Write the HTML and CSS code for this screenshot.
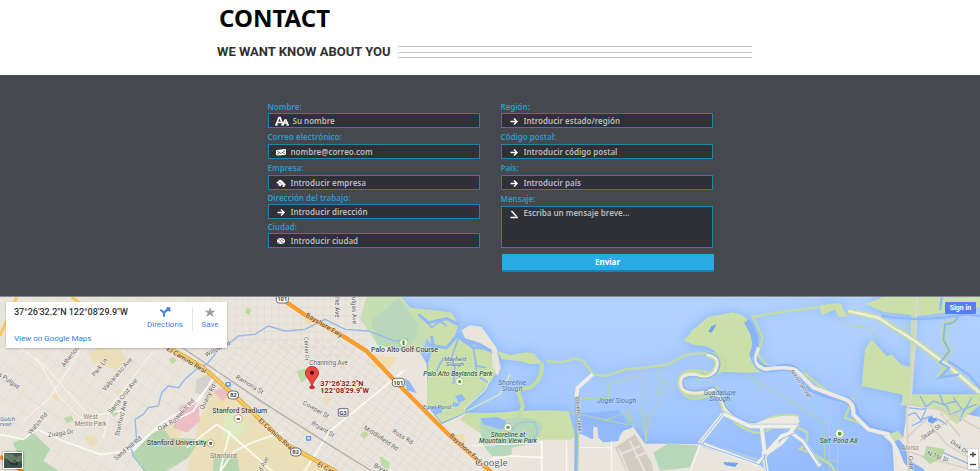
FILE: index.html
```html
<!DOCTYPE html>
<html lang="es">
<head>
<meta charset="utf-8">
<meta name="viewport" content="width=device-width, initial-scale=1">
<title>Contact</title>
<link rel="stylesheet" href="styles.css">
</head>
<body>
<header class="intro">
  <h1>CONTACT</h1>
  <div class="tagline"><h2>WE WANT KNOW ABOUT YOU</h2><div class="rules"></div></div>
</header>

<main>
<section class="contact">
  <form class="form">
    <div class="column">
      <label for="name">Nombre:</label>
      <div class="field">
        <svg class="icon wide" viewBox="0 0 28 20"><g fill="none" stroke="#fff" stroke-width="3.4"><path d="M2 18 8 3h2l6 15M5 13h9M16 18l4-10h2l4 10M18 14h6"/></g><path fill="#fff" d="M0 17h6v2H0zM12 17h6v2h-6zM22 17h6v2h-6z"/></svg>
        <input id="name" type="text" placeholder="Su nombre">
      </div>
      <label for="email">Correo electrónico:</label>
      <div class="field">
        <svg class="icon" viewBox="0 0 24 20"><path fill="#fff" d="M3 6 20 4q2 0 2 2v8q0 2-2 2L5 17q-3 0-3-2V8q0-2 1-2"/><path d="m4 8 8 5 8-6M4 15l5-4M20 14l-5-3" fill="none" stroke="#303136" stroke-width="1.3"/></svg>
        <input id="email" type="email" placeholder="nombre@correo.com">
      </div>
      <label for="company">Empresa:</label>
      <div class="field">
        <svg class="icon" viewBox="0 0 24 20"><path fill="#fff" d="m2 10 8-7 5 3 7 8-3 1v3h-4v-4h-3v3l-5-2v-4z"/><path stroke="#303136" d="m9 8 7 7"/></svg>
        <input id="company" type="text" placeholder="Introducir empresa">
      </div>
      <label class="tight" for="address">Dirección del trabajo:</label>
      <div class="field">
        <svg class="icon" viewBox="0 0 24 20"><path d="M5 11h13M12 5l6 6-6 6" fill="none" stroke="#fff" stroke-width="3"/></svg>
        <input id="address" type="text" placeholder="Introducir dirección">
      </div>
      <label class="tight" for="city">Ciudad:</label>
      <div class="field">
        <svg class="icon" viewBox="0 0 24 20"><ellipse cx="12" cy="10" rx="8" ry="6" fill="#fff"/><path d="m7 7 4 2 2 4 4 1M12 5l2 3 4 1M6 12l3 1" fill="none" stroke="#303136" stroke-width="1.3"/></svg>
        <input id="city" type="text" placeholder="Introducir ciudad">
      </div>
    </div>
    <div class="column">
      <label for="region">Región:</label>
      <div class="field">
        <svg class="icon" viewBox="0 0 24 20"><path d="M5 11h13M12 5l6 6-6 6" fill="none" stroke="#fff" stroke-width="3"/></svg>
        <input id="region" type="text" placeholder="Introducir estado/región">
      </div>
      <label for="zip">Código postal:</label>
      <div class="field">
        <svg class="icon" viewBox="0 0 24 20"><path d="M5 11h13M12 5l6 6-6 6" fill="none" stroke="#fff" stroke-width="3"/></svg>
        <input id="zip" type="text" placeholder="Introducir código postal">
      </div>
      <label for="country">País:</label>
      <div class="field">
        <svg class="icon" viewBox="0 0 24 20"><path d="M5 11h13M12 5l6 6-6 6" fill="none" stroke="#fff" stroke-width="3"/></svg>
        <input id="country" type="text" placeholder="Introducir país">
      </div>
      <label for="message">Mensaje:</label>
      <div class="field message">
        <svg class="icon" viewBox="0 0 24 20"><path d="m7 4 10 11M5 17h15" fill="none" stroke="#fff" stroke-width="3"/></svg>
        <textarea id="message" rows="3" placeholder="Escriba un mensaje breve..."></textarea>
      </div>
      <button class="send" type="submit">Enviar</button>
    </div>
  </form>
</section>

<section class="map">
<svg class="canvas" viewBox="0 18 2940 525" role="img" aria-label="Map of Palo Alto">
  <defs>
    <pattern id="grid" width="26" height="19" patternUnits="userSpaceOnUse" patternTransform="rotate(36)"><path d="M0 0h26M0 0v19" fill="none" stroke="#d3cec5" stroke-width="2"/></pattern>
    <pattern id="blocks" width="44" height="32" patternUnits="userSpaceOnUse" patternTransform="rotate(-56)"><path d="M0 0h44M0 0v32" fill="none" stroke="#d6d1c8" stroke-width="2"/></pattern>
    <pattern id="square" width="22" height="24" patternUnits="userSpaceOnUse"><path d="M0 0h22M0 0v24" fill="none" stroke="#d8d3ca" stroke-width="2"/></pattern>
    <filter id="shade" filterUnits="userSpaceOnUse" x="-60" y="-60" width="3060" height="680" color-interpolation-filters="sRGB"><feDropShadow dx="0" dy="0" stdDeviation="16" flood-color="#7dabf6" flood-opacity=".8"/></filter>
    <linearGradient id="bay" x2="0" y2="1"><stop stop-color="#b3d2ff"/><stop offset=".5" stop-color="#a9cbff"/><stop offset="1" stop-color="#96bdfc"/></linearGradient>
  </defs>
  <rect y="18" width="2940" height="525" fill="url(#bay)"/>

  <!-- coast and levees -->
  <g filter="url(#shade)">
    <path class="land" d="M0 18h1160l120 200 5 130 40 52 75-35 70 25v170H0z"/>
    <path fill="#cadfaa" d="m1110 18 90 0 30 32 75 8 50 7 20 35-10 35 25 20 60 13 35 27 10 40-25 40-70 70-5 20-70 30-45-60 5-120 15-50-50-55z"/>
    <path class="land" d="m1385 118 25-15 35 5 20 28 25 35 12 60-10 25-15-30-2-50-35-20-45-15z"/>
    <path fill="#cadfaa" d="m1400 365 70 1v80l-90-60z"/>
  <g transform="translate(1470)">
    <path fill="#cadfaa" d="M0 366q130-12 235-6l28 92H0z"/>
    <path class="land" d="m-60 446 300 0 30-18 40 17 0-38 12 2 3 31 15 14 45-4 5-20-15-4 10-10 35-4 5-14 15 25 25 35 80 0 90 2 70 28 100 30 30 23H-60zM1212 543l-5-85-30-25 63 5 15-105 215 45v165z"/>
    <path fill="#cadfaa" d="M578 147q20-10 25-27l20-15 30-27 75-14q40 4 47 31l25 30-15 70q10 38 40 48-60 5-115 0-30 3-42-2 26-15 19-40-15-40-75-38z"/>
    <path fill="#cadfaa" d="m1115 285 10-110 20-30 45 50 15-5 30 32 25 5 5-209h10l-10 325-30 0 3-32zM1125 38l55-20h290v30l-90 15-90 12-110-12z"/>
    <path fill="#cadfaa" d="m22 180 40 12 45-8 25 3 23 30-35 3-30-10-55-5zM1255 310h215v32l-70 58-60-50-110-8zM987 43l45-6 20 0 20 42-28-3-10-20-40 16z"/>
    <g fill="none" stroke="#c3dca0" stroke-width="7">
      <path d="m170 210 45 4 40-12 25 8 30 40 35 5 60-20 60-5 70-10 50-28q100-15 115 10 20 30-10 42l-25 5q-70-25-90 5-15 60 35 70l55-10q40 0 40 40l35 45q60 40 90 20 60-35 120 5 10 30-20 50l40 15 50 30 30 40"/>
      <path d="m785 78 60-10 140-20M790 80l28 60-15 50 40 48 60-3 45 15 60 50 70 28 20 40 50 50 60 10M1090 320l-25 60 55 20 80 25"/>
      <path stroke-width="12" d="M155 215q5 50-35 75l-38 5 17 50-25 60"/>
    </g>
  </g>
  </g>

  <!-- city blocks and parks -->
  <path fill="url(#blocks)" d="M0 18h630l20 160-110 170-150 195H0z"/>
  <path fill="url(#grid)" d="m640 220 120-80 310 10 80 110 280 283H900L620 260z"/>
  <path fill="url(#square)" d="M630 18h470v140l-80 60-220-60-130 30z"/>
  <path fill="#eadfb9" d="m630 290 70 20 170 160 150 73H560l30-130z"/>
  <path fill="#eadfb9" d="m265 185 30-15 65 5 20 30-30 30-70-15zM480 410l60-20 10 40-60 40zM250 440l25-10 20 20-20 20z"/>
  <path fill="#eebfc2" d="m540 345 55-15 5 60-40 35-40-15zM640 300l30-10 20 25-25 15z"/>
  <path fill="#d5d1d1" d="m590 265 35-15 30 20-40 45-30-10z"/>
  <path fill="#b7d5ae" d="m425 445 65-35 20 30 90 5-35 55-70 43h-60l-40-50zM40 455l60-30 50 50-20 35 50 33H70zM640 490l70 0 10 53h-80z"/>
  <path fill="#c5deb2" d="M1100 18h105l45 55 35 50-20 65-40-10-90-15-55-80z"/>
  <path fill="#b9d7bb" d="m1115 90 80-68 60 78-10 45-40 35-75-20z"/>
  <g fill="#bedba4"><path d="m740 50 15 5-8 18-12-8zM505 205l15-8 10 12-12 10zM110 90l20-5v20l-15 5zM960 300l20-8-3 18zM890 240l25-8 10 25-20 20zM1175 260l50 10-10 20-35-7zM1080 430l15-10 12 10-15 14zM800 340l15 5-8 8zM190 380l25-5 6 14-20 8zM1140 495l30 20-5 20-20-10zM330 355l15-5 10 18-15 10zM550 160l25-4-10 14z"/></g>
  <g fill="#f0ddb1"><path d="m1120 190 70 10-25 35-50-10zM915 70l30 10-5 35-25-20zM975 315l20 10-10 10-20-10zM1020 220l20 4-8 14zM155 315l20-12 8 16-18 8zM345 300l15-5 6 12-14 8zM1360 430l30 0 10 25-30 10zM640 330l45 5 20 40-50 0z"/></g>
  <path fill="#dfe9c0" d="m675 375 40-10 30 45-40 40-40-10z"/>

  <g fill="none" stroke="#faf8f3" stroke-width="5">
    <path d="M0 430 70 445l40-30 80 35 110 40 90-10 90-80 110-70 70-90M400 480l60-60 120-60 60-100M1210 240l-60 50-160 130-70 110-10 13M560 470l90-70 30 20 80 70 60 53M660 543l40-60 60-30 90-30M690 420l-30 120"/>
    <path stroke-width="3" d="m110 200 70 120 60 60 120-20M240 180l-90 140-80 70M460 180 330 350l-20 90M60 170l80 60 150 170"/>
  </g>
  <path d="m540 165 250 170 220 140 110 68" fill="none" stroke="#b4b1ad" stroke-width="4"/>
  <g fill="none" stroke="#95b9ee" stroke-width="4">
    <path d="m400 490-10-25 20-20-5-60 25-15 15-20 30-5 10-40 20-20 30 5 20-25 40-35 25-10 25-30 20-40 20 10 30-25 50-5 40-25 50 15 60-5 60-30 60 30 70 5 80 30 40-5"/>
    <path stroke-width="3" d="m395 490 40 50"/>
  </g>

  <!-- wetlands -->
  <g fill="none" stroke="#91b9fc" stroke-width="9">
    <path d="m1255 70 30 25 55-12 35 17M1375 130l-35 40-40-5-5-30M1375 135l45 35 30 0 20 10"/>
    <path stroke-width="5" d="m1375 140-20 60 10 30-5 50M1280 90l15 20 25-20 20 15M1330 200l-20 40M1420 175l10 50 30 5M1425 210l5 30M1440 260l25 15-10 30-55 45"/>
  </g>
  <path fill="#91b9fc" d="m1215 262 15 10 20 35-30-10zM1365 315l20-5 12 15-20 12zM1360 333l20 5-8 10-16-4zM1295 350l35-5-5 20-20 5z"/>
  <path fill="none" stroke="#dde9bd" stroke-width="4" d="m1455 240 12 30-10 25-65 60M1400 360l100-50 30-60"/>
  <g fill="none">
    <path stroke="#d99d35" stroke-width="13" d="m490 160 120 70 90 80 160 150 150 83"/>
    <path stroke="#fac85d" stroke-width="9" d="m490 160 120 70 90 80 160 150 150 83M0 135l50-117M215 18l30 22"/>
    <path stroke="#ed9121" stroke-width="12" d="m840 20 80 55 100 55 80 50 90 95 160 160 135 118M0 497l70 46"/>
    <path stroke="#ff9d29" stroke-width="9" d="m840 20 80 55 100 55 80 50 90 95 160 160 135 118"/>
  </g>

  <!-- south bay -->
  <g transform="translate(1470)">
    <path fill="#b7d7bb" d="m-30 390 60-5 40-5 60 2 30 23-25 50-70 15v25h-60l-30-40zM490 485l45-28 90 7-25 65-90 10z"/>
    <path d="M65 420q15-35 70-25 20 45-20 50M15 465l60-10" fill="none" stroke="#9ac6df" stroke-width="4"/>
    <path fill="#91b9fc" d="m-30 382 50-4 25 10 5 22-20 5-50-15zM310 365l75-8 45 52-30 10-20 30-40 5-15-45-15-2-4 38-35-20-10-60z"/>
    <path fill="#d2cdc4" d="m375 470 60-40 50 85 5 28h-80z"/>
    <path fill="none" stroke="#e6e2da" stroke-width="6" d="m390 490 60-25M415 543l-30-70M435 500l40-20M420 450l45 93"/>
    <path fill="none" stroke="#fffdf8" stroke-width="5" d="M155 450v93M0 505l60-10 100 5"/>
    <path fill="none" stroke="#fbf8f1" stroke-width="3" d="M230 450v93M365 450v93M-60 465l215-10M270 470h95M630 462l-30 81"/>
    <path fill="none" stroke="#93b9ed" stroke-width="11" d="M260 315v60l-2 168"/>
    <path fill="none" stroke="#bfdda0" stroke-width="4" d="M267 315v60l-3 168"/>
    <path fill="none" stroke="#b9d69b" stroke-width="3" d="M455 230v130l15 90-10-80M505 225l-3 50 8 65-30 30-15 85M270 323h85v-45l100-25M505 262l55 35M755 245l260 155M1018 325v218M1043 400v143M1004 430v80h40M235 362l180 40 0-40-75 28M415 362l20 45M1045 80q20 30 90 28 30 15 22 42M1120 275l-30 40"/>
    <path fill="none" stroke="#f2eee5" stroke-width="11" d="m308 250-45 40-4 28"/>
    <path fill="none" stroke="#c3dca0" stroke-width="20" d="M650 190q50 10 25 50-20 30-60 10-55-5-40 40 20 30 100 5 20 20 30 60 50 60 110 45 50-30 110-18"/>
    <path fill="none" stroke="#eeeae1" stroke-width="9" d="M650 190q50 10 25 50-20 30-60 10-55-5-40 40 20 30 100 5 20 20 30 60 50 60 110 45 50-30 110-18"/>
    <path fill="none" stroke="#8fb9f7" stroke-width="5" d="M650 184q55 10 33 58-24 30-64 16-50-5-37 31 23 20 88-2 25 23 38 61 50 57 108 43"/>
    <path fill="none" stroke="#8ab4f8" stroke-width="19" d="M770 90q40 60 18 100 10 45 60 45 60-20 80 15l30 40q60 30 110 35 30 20 30 45 20 30 50 45l50 12 35 40 20 50 45 26"/>
    <path fill="none" stroke="#eeeae1" stroke-width="12" d="M805 170q-30 50 20 65 80-10 95 5l50 50 80 30q45 10 40 50l45 45 60 15q30 50 35 85l25 20"/>
    <path fill="none" stroke="#91b9fc" stroke-width="5" d="M798 170q-25 60 28 73 72-12 88 3l50 50 80 32"/>
    <path fill="#eeeae1" d="m780 402 60-20 70-4 20 10-15 25-40 0-60 0z"/>
    <path fill="none" stroke="#aac8e8" stroke-width="16" d="m700 368-72 90M700 368l80 38 50 0 85 0-90 85-10-80M640 460l180 55M830 485l75-60 35 25 50 75M820 480l10 63"/>
    <path fill="none" stroke="#f1eee6" stroke-width="11" d="m700 368-72 90M700 368l80 38 50 0 85 0-40 50-50 35-10-80M640 460l160 60 30-30M830 485l45-50 30-10 35 25 50 75M820 480l10 63"/>
    <path fill="none" stroke="#91b9fc" stroke-width="3" d="m700 368-72 90 180 63 22-32M865 450l50-25 30 25 45 70M822 490l8 53"/>
    <path fill="#6ba4f2" d="m700 513 45 3-10 12-30-6zM665 105l15-5-15 25-10-3zM1313 382l14-8 2 8 14-2-14 18-14-5z"/>
    <path fill="none" stroke="#8ab5f1" stroke-width="4" d="m1250 350 50 5 30-25 40 15 10 25 80-30M1290 315l20 35-15 35 30-10M1350 310l10 30 40-10M1390 320l30 40-10 30M1370 400l-25-15-20 12M1250 375l25-10 20 25-30 15M1300 500l60-15 80 35 30 10M1445 320l-25 45"/>
    <path fill="none" stroke="#dbd8ca" stroke-width="7" d="M1281 18 1275 150 1262 320 1250 360 1256 543"/>
    <path fill="none" stroke="#c3dca0" stroke-width="17" d="m1075 60 90 20 110 70 100 75 95 80M1400 80q-10 15-35 20l-5 45 20 35-30 35 20 15-25 30"/>
    <path fill="none" stroke="#f0ece3" stroke-width="8" d="m1075 60 90 20 110 70 100 75 95 80"/>
    <path fill="none" stroke="#8fb9fc" stroke-width="7" d="M1175 75q120 20 250-5l45 5M1405 75q-10 25-40 25l-5 45 18 35-28 35 28 15-30 30 60-10M1375 210l60 40 35 40M1355 18l-5 40"/>
    <path fill="none" stroke="#bad795" stroke-width="3" d="m1195 95 30 20 30-15-5 25 20 10"/>
    <path fill="none" stroke="#d4cec3" stroke-width="4" d="m1250 440 65-60M1290 450l130-95M1320 400l50 60 100 60M1350 365l60 70M1250 480l60 20 160 43M1255 340l115 20 100 55"/>
    <path fill="#b7d7a2" d="m1310 465 55 10-15 30-30 15-20-20z"/>
    <path fill="#cadfaa" d="m1195 430 30-10 15 20-25 10z"/>
  </g>

  <!-- place names -->
  <g class="road">
    <text transform="translate(193 229) rotate(-52)">Atherton Ave</text><text transform="translate(284 258) rotate(-52)">Park Ln</text>
    <text transform="translate(315 301) rotate(-49)">Valparaiso Ave</text><text transform="translate(333 369) rotate(-51)">Santa Cruz Ave</text>
    <text transform="translate(357 436) rotate(-77)">Stanford Ave</text><text transform="translate(92 431) rotate(-49)">Walsh Rd</text>
    <text transform="translate(145 438) rotate(-8)">Zuaga Dr</text><text transform="translate(347 509) rotate(-39)">Sand Hill Rd</text>
    <text transform="translate(477 420) rotate(-27)">Oak Rd</text><text transform="translate(532 389) rotate(-48)">Welch Rd</text>
    <text transform="translate(609 357) rotate(-62)">Quarry Rd</text><text transform="translate(619 198) rotate(-27)">Willow Rd</text>
    <text transform="translate(706 262) rotate(31)">Ramona St</text><text transform="translate(907 339) rotate(30)">Cowper St</text>
    <text transform="translate(933 400) rotate(31)">Bryant St</text><text transform="translate(1090 413) rotate(34)">Middlefield Rd</text>
    <text transform="translate(1175 424) rotate(32)">Ross Rd</text><text transform="translate(1120 527) rotate(28)">Bryant St</text>
    <text class="creek" transform="translate(913 138) rotate(88)">Center Dr</text><text x="928" y="221">Channing Ave</text>
    <text transform="translate(1005 18) rotate(90)">rke Ave</text><text transform="translate(1055 18) rotate(88)">ulgas Ave</text>
    <text transform="translate(-6 254) rotate(34)">s Pulgas</text><text transform="translate(785 543) rotate(-62)">d Ave</text>
    <text class="creek" transform="translate(1728 315) rotate(87)">Stevens Creek</text><text class="creek" transform="translate(2370 240) rotate(55)">Alviso Slough</text>
    <text transform="translate(2770 447) rotate(-36)">State St</text><text transform="translate(2850 455) rotate(36)">Disk Dr</text>
    <text transform="translate(2780 491) rotate(20)">N 1st St</text><text transform="translate(2725 495) rotate(88)">Gold St</text>
  </g>
  <g class="highway"><text transform="translate(499 178) rotate(31)">El Camino Real</text><text transform="translate(774 391) rotate(42)">El Camino Real</text><text transform="translate(950 524) rotate(28)">El Camino</text><text transform="translate(916 76) rotate(31)">Bayshore Fwy</text><text transform="translate(1347 436) rotate(42)">Bayshore Fwy</text></g>
  <g class="place"><text x="637" y="365">Stanford Stadium</text><text x="440" y="463">Stanford University</text><text x="1113" y="183">Palo Alto Golf Course</text></g>
  <g class="town"><text x="272" y="383" text-anchor="middle">West</text><text x="272" y="404" text-anchor="middle">Menlo Park</text><text class="big" x="630" y="502">Stanford</text><text x="2705" y="477">Alviso</text></g>
  <g class="park"><text x="1270" y="254">Palo Alto Baylands Park</text><text x="1524" y="437" text-anchor="middle">Shoreline at</text><text x="1524" y="456" text-anchor="middle">Mountain View Park</text><text x="2459" y="456">Salt-Pond A8</text></g>
  <g class="water"><text x="1365" y="210" text-anchor="middle">Mayfield</text><text x="1365" y="226" text-anchor="middle">Slough</text><text x="1268" y="353">Egret Pond</text><text x="0" y="389">Gulch</text><text x="0" y="405">rvoir</text><text class="big" x="1536" y="282" text-anchor="middle">Shoreline</text><text class="big" x="1536" y="301" text-anchor="middle">Slough</text><text class="big" x="1791" y="336">Jogel Slough</text><text class="big" x="2159" y="312" text-anchor="middle">Guadalupe</text><text class="big" x="2159" y="331" text-anchor="middle">Slough</text></g>

  <g class="shield">
    <rect x="829" y="12" width="36" height="24" rx="8"/><text x="847" y="31">101</text>
    <rect x="1177" y="262" width="36" height="24" rx="8"/><text x="1195" y="281">101</text>
    <rect x="683" y="300" width="33" height="24" rx="12"/><text x="700" y="319">82</text>
    <rect x="871" y="471" width="33" height="24" rx="12"/><text x="887" y="490">82</text>
    <rect x="1015" y="353" width="29" height="22" rx="1"/><text x="1029" y="371">G3</text>
  </g>
  <g fill="#fff"><g stroke="#a98e70" stroke-width="2"><circle cx="715" cy="383" r="12"/><circle cx="632" cy="457" r="11"/></g><g stroke="#90ad80" stroke-width="2"><circle cx="1211" cy="155" r="12"/><circle cx="1379" cy="272" r="12"/><circle cx="1524" cy="409" r="12"/><circle cx="2519" cy="428" r="13"/></g></g>
  <g fill="#59a51d"><circle cx="1379" cy="272" r="5"/><circle cx="1524" cy="409" r="5"/><circle cx="2519" cy="428" r="6"/><path d="M1207 148h7v14h-7z"/></g>
  <path fill="#94603b" d="M710 381h10v6h-10zM626 453h12l-3 9h-6z"/>
  <g fill="#549bea"><path d="M677 273h15v14h-15zM918 435h15v14h-15z"/><path fill="#fff" d="M681 277h7v6h-7zM922 439h7v6h-7z"/></g>

  <ellipse cx="936" cy="289" rx="8" ry="6" fill="#d6292b"/>
  <path d="M936 289c-3-22-20-29-20-43a20 20 0 0 1 40 0c0 14-17 21-20 43" fill="#ed4441" stroke="#a32525" stroke-width="2"/><circle cx="936" cy="245" r="6" fill="#4a0b0d"/>
  <g class="pin"><text x="961" y="284">37°26'32.2"N</text><text x="961" y="307">122°08'29.9"W</text></g>
  <text class="brand" x="1426" y="525">Google</text>
</svg>

<div class="card">
  <div class="location"><strong>37°26'32.2"N 122°08'29.9"W</strong><a href="#">View on Google Maps</a></div>
  <a class="action" href="#"><svg viewBox="0 0 36 30"><path d="M15 29V17L4 8M17 18q0-8 10-9" fill="none" stroke="#4285e8" stroke-width="6"/><path fill="#4285e8" d="M22 1h12v14l-5-3-7 0z"/></svg>Directions</a>
  <a class="action save" href="#"><svg viewBox="0 0 36 32"><path fill="#9b9b9b" d="m18 0 4 12h14l-11 7 5 13-12-8-12 8 5-13L0 12h14z"/></svg>Save</a>
</div>
<button class="signin" type="button">Sign in</button>
<button class="satellite" type="button" aria-label="Satellite"><svg viewBox="0 0 54 42" preserveAspectRatio="none"><path fill="#3c544b" d="M0 0h54v42H0z"/><path fill="#617967" d="m0 0 25 3 10 8 19-6v18L25 28 0 13z"/><path fill="#2b352d" d="m7 12 15 12 12-4 10 8-6 9-20-5z"/><path d="m5 8 14 16 14 2 12-9" fill="none" stroke="#a1ac96" stroke-width="2"/></svg></button>
<div class="zoom"><button type="button" aria-label="Zoom in"><svg viewBox="0 0 10 9"><path d="M2 4.5h6M5 2v5" stroke="#444" stroke-width="1.4"/></svg></button><button type="button" aria-label="Zoom out"><svg viewBox="0 0 10 9"><path d="M2 4.5h6" stroke="#444" stroke-width="1.4"/></svg></button></div>
</section>
</main>
</body>
</html>
```
FILE: styles.css
```css
* { box-sizing: border-box; }
body { margin: 0; background: #fff; font-family: "Noto Sans", sans-serif; }
h1, h2 { margin: 0; }
button, input, textarea { font: inherit; }
a { color: #3b7ce6; text-decoration: none; }

.intro { padding: 3px 228px 14px 217px; }
.intro h1 { padding-left: 2px; color: #050505; font-size: 24px; line-height: 30px; }
.tagline { display: flex; align-items: center; gap: 7px; padding-top: 10px; }
.tagline h2 { color: #303030; font-family: Roboto, "Noto Sans", sans-serif; font-size: 13px; line-height: 18px; white-space: nowrap; }
.rules { flex: 1; height: 12px; border: solid #c6c6c6; border-width: 1px 0; background: linear-gradient(#c6c6c6, #c6c6c6) center / 100% 1px no-repeat; }

.contact { padding: 26px 16px 24px; background: #45484d; }
.form { display: grid; grid-template-columns: 1fr 1fr; gap: 21px; max-width: 445px; margin: 0 auto; }
.column { display: flex; flex-direction: column; color: #2c9bca; font-size: 8px; font-weight: 600; }
.column label { height: 16px; padding-top: 3px; line-height: 12px; }
.column label:first-child { height: 12px; padding-top: 0; }
.column label.tight { height: 14px; padding-top: 2px; }
.field { display: flex; align-items: center; gap: 4px; height: 15px; padding-left: 6px; border: 1px solid #2184ad; background: #303136; }
.field input, .field textarea { flex: 1; min-width: 0; height: 13px; padding: 0; border: 0; outline: 0; background: transparent; color: #c3c4c6; line-height: 13px; resize: none; }
.field ::placeholder { color: #b9babd; opacity: 1; font-weight: 600; }
.icon { width: 12px; height: 10px; }
.icon.wide { width: 14px; }
.field.message { align-items: flex-start; height: 42px; }
.message .icon { margin-top: 2px; }
.field.message textarea { height: 40px; line-height: 12px; }
.send { height: 18px; margin: 6px -1px 0 1px; padding: 0; border: 0; border-bottom: 2px solid #1783b3; border-radius: 1px; background: #29abe5; color: #fff; font-weight: 700; line-height: 14px; }

.map { position: relative; overflow: hidden; border-top: 1px solid #85898e; font-family: Roboto, sans-serif; }
.canvas { display: block; width: 100%; height: auto; font-family: Roboto, sans-serif; }
.land { fill: #e9e5dc; }
.canvas text { paint-order: stroke; stroke: #ffffff99; stroke-width: 3px; }
.road { fill: #65615e; font-size: 19px; }
.creek { font-size: 17px; }
.highway { fill: #7d4a12; font-size: 20px; font-weight: 500; }
.place { fill: #484946; font-size: 21px; font-weight: 500; }
.town { fill: #8b7761; font-size: 19px; }
.park { fill: #345f3c; font-size: 20px; font-weight: 500; font-style: italic; }
.water { fill: #4b70a8; font-size: 18px; font-style: italic; }
.canvas .water text { stroke: #ffffff44; }
.canvas .big { font-size: 21px; }
.shield { fill: #444; font-size: 18px; font-weight: 700; text-anchor: middle; }
.shield rect { fill: #fff; stroke: #6e6e6e; stroke-width: 3px; }
.pin { fill: #971820; font-size: 22px; font-weight: 700; }
.canvas .brand { fill: #5b5b58; font-family: "Liberation Serif", serif; font-size: 33px; stroke: #fff; }

.card { position: absolute; top: 5px; left: 6px; display: flex; width: 221px; height: 46px; padding: 5px 0 4px 8px; background: #fff; box-shadow: 0 1px 2px #0003; font-size: 8px; }
.location { display: flex; flex: 1; flex-direction: column; justify-content: space-between; line-height: 10px; }
.location strong { color: #303030; font-size: 9px; font-weight: 500; white-space: nowrap; }
.action { display: flex; flex-direction: column; align-items: center; gap: 2px; width: 54px; height: 24px; line-height: 12px; }
.action svg { width: 12px; height: 11px; }
.action.save { width: 35px; border-left: 1px solid #e5e5e5; }
.signin { position: absolute; top: 5px; right: 4px; width: 31px; height: 12px; padding: 0; border: 0; border-radius: 1px; background: #587fed; color: #fff; font-size: 7px; font-weight: 700; line-height: 12px; }
.satellite { position: absolute; bottom: 3px; left: 3px; width: 20px; height: 17px; padding: 0; border: 1px solid #fff; box-shadow: 0 0 2px #0008; }
.satellite svg { display: block; width: 100%; height: 100%; }
.zoom { position: absolute; right: 2px; bottom: 3px; display: flex; flex-direction: column; width: 10px; background: #fff; box-shadow: 0 0 1px #0006; }
.zoom button { height: 10px; padding: 0; border: 0; background: transparent; }
.zoom svg { display: block; width: 10px; height: 9px; }
```
